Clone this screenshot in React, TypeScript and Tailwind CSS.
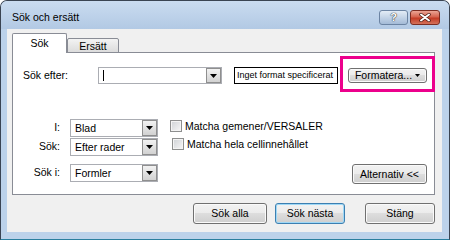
import React from "react";

const Arrow = () => (
  <svg width="7" height="4" viewBox="0 0 7 4">
    <path d="M0 0h7L3.5 4z" fill="#000" />
  </svg>
);

const Combo = ({ value, className, cursor }: { value?: string; className: string; cursor?: boolean }) => (
  <div className={`flex bg-white border border-[#abadb3] ${className}`}>
    <div className="flex-1 flex items-center pl-[4px] leading-none">
      {cursor && <span className="w-px h-[11px] bg-black" />}
      {value}
    </div>
    <div className="w-[15px] flex items-center justify-center border border-[#8f8f8f] bg-linear-to-b from-[#f2f2f2] to-[#d2d2d2]">
      <Arrow />
    </div>
  </div>
);

const Btn = ({
  children,
  className,
  focused,
}: {
  children: React.ReactNode;
  className: string;
  focused?: boolean;
}) => (
  <div
    className={`flex items-center justify-center rounded-[3px] border leading-none bg-[linear-gradient(#f2f2f2,#ebebeb_50%,#dddddd_50%,#cfcfcf)] ${
      focused
        ? "border-[#3c7fb1] shadow-[inset_0_0_0_1px_#9fd8f6]"
        : "border-[#707070] shadow-[inset_0_0_0_1px_#fafafa]"
    } ${className}`}
  >
    {children}
  </div>
);

const Check = ({ label, className }: { label: string; className?: string }) => (
  <div className={`flex items-center gap-[3px] h-[12px] ${className ?? ""}`}>
    <span className="w-[12px] h-[12px] border border-[#8e8f8f] bg-linear-to-br from-[#cfd2d6] to-[#f7f7f7] shadow-[inset_0_0_0_1px_#f4f4f4]" />
    <span className="leading-none">{label}</span>
  </div>
);

const Field = ({ label, value, className }: { label: string; value: string; className?: string }) => (
  <div className={`flex items-center ${className ?? ""}`}>
    <div className="w-[47px] text-right">{label}</div>
    <Combo value={value} className="ml-[10px] w-[88px] h-[18px]" />
  </div>
);

export default function App() {
  return (
    <div className="w-[450px] h-[240px] flex flex-col overflow-hidden rounded-t-[7px] border border-[#3a4452] border-b-[#2a7f9e] bg-[#bcd2ea] text-black text-[10.5px] font-['Liberation_Sans',Arial,sans-serif]">
      {/* title bar */}
      <div className="h-[28px] flex items-start justify-between pl-[11px] pr-[9px] pt-[9px] bg-linear-to-b from-[#cadcf0] to-[#b2c9e4]">
        <div className="h-[15px] flex items-center">Sök och ersätt</div>
        <div className="flex gap-[2px]">
          <div className="w-[29px] h-[15px] rounded-[3px] border border-[#6c84a3] bg-linear-to-b from-[#e3ecf6] to-[#a4bbd7] flex items-center justify-center text-[11px] font-bold text-white [text-shadow:0_0_1px_#222,0_0_1px_#222]">
            ?
          </div>
          <div className="w-[30px] h-[15px] rounded-[3px] border border-[#7c2d22] bg-[linear-gradient(#eba595,#d5644f_45%,#c33b25_55%,#d4725a)] flex items-center justify-center">
            <svg width="12" height="9" viewBox="0 0 12 9">
              <path d="M2 1.5l8 6M10 1.5l-8 6" stroke="#4a1a12" strokeWidth="3.4" strokeLinecap="round" />
              <path d="M2 1.5l8 6M10 1.5l-8 6" stroke="#fff" strokeWidth="2" strokeLinecap="round" />
            </svg>
          </div>
        </div>
      </div>

      {/* client area */}
      <div className="ml-[6px] w-[435px] h-[203px] bg-[#f0f0f0] flex flex-col">
        <div className="relative z-10 flex items-end pl-[5px] pt-[4px] -mb-px">
          <div className="w-[55px] h-[20px] bg-white border border-b-0 border-[#898c95] rounded-t-[2px] flex items-center justify-center">
            Sök
          </div>
          <div className="w-[52px] h-[15px] border border-[#898c95] rounded-t-[2px] bg-linear-to-b from-[#f3f3f3] to-[#dcdcdc] flex items-center justify-center pt-[2px]">
            Ersätt
          </div>
        </div>

        <div className="ml-[5px] w-[423px] h-[143px] bg-white border border-[#898c95] flex flex-col">
          <div className="flex items-center mt-[14px] h-[17px]">
            <div className="pl-[10px] w-[85px]">Sök efter:</div>
            <Combo className="w-[124px] h-[17px]" cursor />
            <div className="ml-[12px] w-[104px] h-[17px] border border-black flex items-center pl-[2px] text-[9px] whitespace-nowrap overflow-hidden">
              Inget format specificerat
            </div>
            <div className="relative ml-[10px]">
              <Btn className="w-[79px] h-[15px] gap-[3px]">
                <span>Formatera...</span>
                <svg width="5" height="3" viewBox="0 0 5 3">
                  <path d="M0 0h5L2.5 3z" fill="#000" />
                </svg>
              </Btn>
              <div className="absolute -left-[8px] -right-[8px] -top-[12px] -bottom-[9px] border-[3px] border-[#ec008c]" />
            </div>
          </div>

          <div className="flex mt-[35px]">
            <div className="flex flex-col">
              <Field label="I:" value="Blad" />
              <Field label="Sök:" value="Efter rader" className="mt-[1px]" />
              <Field label="Sök i:" value="Formler" className="mt-[8px]" />
            </div>
            <div className="ml-[12px] flex flex-col pt-[1px]">
              <Check label="Matcha gemener/VERSALER" />
              <Check label="Matcha hela cellinnehållet" className="mt-[6px] ml-[2px]" />
            </div>
            <div className="ml-auto mr-[7px] pt-[45px]">
              <Btn className="w-[75px] h-[20px]">Alternativ &lt;&lt;</Btn>
            </div>
          </div>
        </div>

        <div className="flex justify-end pr-[7px] mt-[8px]">
          <Btn className="w-[74px] h-[21px]">Sök alla</Btn>
          <Btn className="w-[70px] h-[21px] ml-[8px]" focused>
            Sök nästa
          </Btn>
          <Btn className="w-[70px] h-[21px] ml-[20px]">Stäng</Btn>
        </div>
      </div>
    </div>
  );
}
